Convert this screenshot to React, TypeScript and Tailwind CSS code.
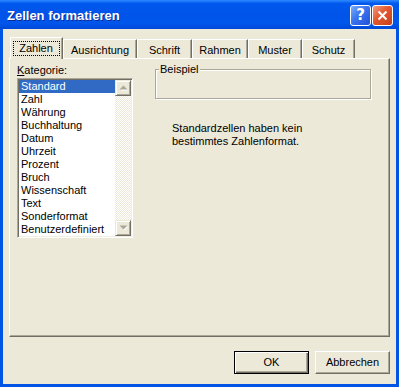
import React from "react";

const items = [
  "Standard",
  "Zahl",
  "Währung",
  "Buchhaltung",
  "Datum",
  "Uhrzeit",
  "Prozent",
  "Bruch",
  "Wissenschaft",
  "Text",
  "Sonderformat",
  "Benutzerdefiniert",
];

const tabs = [
  { label: "Ausrichtung", cls: "w-[74px]" },
  { label: "Schrift", cls: "w-[55px]" },
  { label: "Rahmen", cls: "w-[56px]" },
  { label: "Muster", cls: "w-[54px]" },
  { label: "Schutz", cls: "w-[53px]" },
];

function Arrow({ up }: { up: boolean }) {
  return (
    <svg width="9" height="6" viewBox="0 0 9 6">
      {up ? (
        <>
          <path d="M1.5 5.5 L5.5 1.5 L9 5.5 Z" fill="#fff" />
          <path d="M0.5 4.5 L4.5 0.5 L8.5 4.5 Z" fill="#ACA899" />
        </>
      ) : (
        <>
          <path d="M1.5 1.5 L9 1.5 L5.5 5.5 Z" fill="#fff" />
          <path d="M0.5 0.5 L8.5 0.5 L4.5 4.5 Z" fill="#ACA899" />
        </>
      )}
    </svg>
  );
}

function ScrollBtn({ up }: { up: boolean }) {
  return (
    <div className="h-[16px] w-[16px] bg-[#ECE9D8] border border-t-[#ECE9D8] border-l-[#ECE9D8] border-r-[#716F64] border-b-[#716F64] shadow-[inset_1px_1px_0_#fff,inset_-1px_-1px_0_#ACA899] flex items-center justify-center">
      <Arrow up={up} />
    </div>
  );
}

export default function App() {
  return (
    <div className="w-[399px] h-[387px] flex flex-col bg-[#0055E5] font-['Liberation_Sans',Arial,sans-serif] text-[11px] leading-[13px] text-black overflow-hidden">
      {/* Title bar */}
      <div className="h-[29px] flex items-start pl-[7px] pr-[6px] bg-[linear-gradient(to_bottom,#2E8BFF_0%,#0058EE_12%,#0054E8_50%,#0056EC_80%,#0048D6_100%)]">
        <span className="flex-1 mt-[8px] text-white font-bold text-[13px] leading-[16px] [text-shadow:1px_1px_0_#0B2A9A]">
          Zellen formatieren
        </span>
        <div className="mt-[5px] flex gap-[1px]">
          <div className="w-[21px] h-[21px] rounded-[3px] border border-white bg-[linear-gradient(135deg,#7AAEFA_0%,#3A74EE_45%,#1E50D8_100%)] flex items-center justify-center">
            <span className="text-white font-bold text-[15px] leading-none font-['DejaVu_Sans',sans-serif]">?</span>
          </div>
          <div className="w-[21px] h-[21px] rounded-[3px] border border-white bg-[linear-gradient(135deg,#F29A80_0%,#E2582F_45%,#C63F1A_100%)] flex items-center justify-center">
            <svg width="11" height="11" viewBox="0 0 11 11">
              <path d="M1.5 1.5 L9.5 9.5 M9.5 1.5 L1.5 9.5" stroke="#fff" strokeWidth="2" />
            </svg>
          </div>
        </div>
      </div>

      {/* Body */}
      <div className="flex-1 mx-[3px] mb-[3px] bg-[#ECE9D8] flex flex-col pt-[8px] px-[6px]">
        {/* Tabs */}
        <div className="h-[21px] flex items-end pl-[1px] relative z-10">
          <div className="w-[53px] h-[22px] -mb-px bg-[#ECE9D8] border-l border-t border-white border-r border-r-[#716F64] shadow-[inset_-1px_0_0_#ACA899] flex justify-center pt-[3px] pr-[1px]">
            <div className="w-[47px] h-[15px] border border-dotted border-black flex justify-center">
              Zahlen
            </div>
          </div>
          {tabs.map((t) => (
            <div
              key={t.label}
              className={`${t.cls} h-[19px] bg-[#ECE9D8] border-l border-t border-white border-r border-r-[#716F64] shadow-[inset_-1px_0_0_#ACA899] flex justify-center pt-[4px]`}
            >
              {t.label}
            </div>
          ))}
        </div>

        {/* Panel */}
        <div className="h-[279px] border-l border-t border-white border-r border-b border-r-[#716F64] border-b-[#716F64] shadow-[inset_-1px_-1px_0_#ACA899] flex pt-[3px] pl-[7px]">
          {/* Left column */}
          <div className="mt-[2px] flex flex-col">
            <div>
              <span className="underline">K</span>ategorie:
            </div>
            <div className="mt-[1px] w-[116px] h-[160px] bg-white border border-t-[#ACA899] border-l-[#ACA899] border-b-white border-r-white shadow-[inset_1px_1px_0_#716F64,inset_-1px_-1px_0_#F1EFE2] p-[1px] flex">
              <div className="w-[96px] flex flex-col">
                {items.map((it, i) => (
                  <div
                    key={it}
                    className={
                      i === 0
                        ? "h-[13px] pl-[2px] whitespace-nowrap bg-[#316AC5] text-white"
                        : "h-[13px] pl-[2px] whitespace-nowrap"
                    }
                  >
                    {it}
                  </div>
                ))}
              </div>
              <div className="w-[16px] flex flex-col">
                <ScrollBtn up />
                <div className="flex-1 bg-[repeating-conic-gradient(#ffffff_0%_25%,#ECE9D8_0%_50%)] bg-[length:2px_2px]" />
                <ScrollBtn up={false} />
              </div>
            </div>
          </div>

          {/* Right column */}
          <div className="ml-[22px] flex flex-col">
            <div className="relative mt-[7px] w-[216px] h-[30px] border border-[#ACA899] shadow-[inset_1px_1px_0_#fff,1px_1px_0_#fff]">
              <span className="absolute -top-[7px] left-[3px] px-[1px] bg-[#ECE9D8]">Beispiel</span>
            </div>
            <div className="mt-[23px] pl-[17px] flex flex-col">
              <span>Standardzellen haben kein</span>
              <span>bestimmtes Zahlenformat.</span>
            </div>
          </div>
        </div>

        {/* Buttons */}
        <div className="mt-[14px] flex justify-end gap-[6px]">
          <div className="w-[75px] h-[23px] bg-[#ECE9D8] border border-black shadow-[inset_1px_1px_0_#fff,inset_-1px_-1px_0_#716F64,inset_-2px_-2px_0_#ACA899] flex items-center justify-center">
            OK
          </div>
          <div className="w-[75px] h-[23px] bg-[#ECE9D8] border border-t-white border-l-white border-r-[#716F64] border-b-[#716F64] shadow-[inset_-1px_-1px_0_#ACA899] flex items-center justify-center">
            Abbrechen
          </div>
        </div>
      </div>
    </div>
  );
}
